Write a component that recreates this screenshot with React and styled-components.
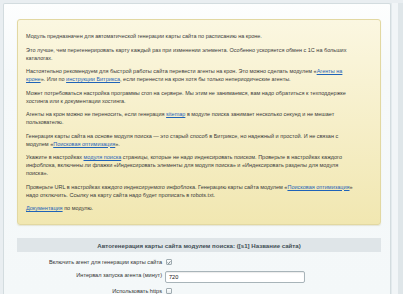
import React from 'react';
import styled, { createGlobalStyle } from 'styled-components';

const GlobalStyle = createGlobalStyle`
  html, body {
    margin: 0;
    padding: 0;
    background: #e9eef1;
    overflow: hidden;
  }
  body {
    font-family: 'Liberation Sans', Arial, sans-serif;
  }
`;

const Page = styled.div`
  display: flex;
  width: 403px;
  height: 294px;
  padding: 3px 0 0 3px;
  box-sizing: border-box;
  overflow: hidden;
`;

const Panel = styled.div`
  flex: 1;
  border: 1px solid #d3dcdf;
  border-bottom: none;
  border-radius: 2px 2px 0 0;
  background: linear-gradient(#fdfefe 0, #f6f9fa 70px, #f4f8f9 100%);
  padding: 15px 9px 0 13px;
`;

const Gutter = styled.div`
  width: 6px;
  background: #f1f5f7;
  border-left: 1px solid #e3eaed;
`;

const ScrollStrip = styled.div`
  width: 5px;
  background: #dfe6e9;
`;

const Note = styled.div`
  border: 1px solid #e2d8a2;
  border-radius: 3px;
  background: linear-gradient(#fbf7e1, #f1e7b1);
  box-shadow: 0 1px 1px rgba(180, 170, 110, 0.25);
  padding: 12px 8px 12px 8px;
  color: #3a3a3a;
  font-size: 5.5px;
  line-height: 8px;
  white-space: nowrap;
`;

const Para = styled.p`
  margin: 0 0 5.5px;
  &:last-child {
    margin-bottom: 0;
  }
`;

const Link = styled.a`
  color: #1f63b8;
  text-decoration: underline;
`;

const SectionHead = styled.div`
  margin-top: 13px;
  height: 14px;
  background: #dfe5e8;
  display: flex;
  align-items: center;
  justify-content: center;
  color: #3f4e54;
  font-size: 6.1px;
  font-weight: bold;
`;

const Row = styled.div`
  display: flex;
  align-items: ${p => (p.top ? 'flex-start' : 'center')};
  height: ${p => p.h}px;
  padding-top: ${p => p.pt || 0}px;
  gap: 3px;
  box-sizing: border-box;
`;

const Label = styled.div`
  width: 145px;
  margin-top: ${p => p.shift || 0}px;
  text-align: right;
  font-size: 5.6px;
  line-height: 8px;
  color: #333;
  white-space: nowrap;
`;

const Box = styled.span`
  width: 6px;
  height: 6px;
  box-sizing: border-box;
  border: 1px solid #9fabb0;
  border-radius: 1px;
  background: linear-gradient(#ffffff, #e6ecee);
  display: flex;
  align-items: center;
  justify-content: center;
  margin-left: 1px;
`;

const TextInput = styled.div`
  width: 140px;
  height: 12px;
  box-sizing: border-box;
  border: 1px solid #a8b4b9;
  border-radius: 2px;
  background: #fff;
  box-shadow: inset 0 1px 1px rgba(0, 0, 0, 0.08);
  padding-left: 3px;
  display: flex;
  align-items: center;
  font-size: 5.6px;
  color: #111;
`;

const Checkbox = ({ checked }) => (
  <Box>
    {checked && (
      <svg width="5" height="5" viewBox="0 0 10 10">
        <path d="M1.5 5.2 L4 7.8 L8.8 1.8" fill="none" stroke="#5a6a70" strokeWidth="1.8" />
      </svg>
    )}
  </Box>
);

export default function App() {
  return (
    <>
      <GlobalStyle />
      <Page>
        <Panel>
          <Note>
            <Para>Модуль предназначен для автоматической генерации карты сайта по расписанию на кроне.</Para>
            <Para>
              Это лучше, чем перегенерировать карту каждый раз при изменении элемента. Особенно ускоряется обмен с 1С на больших
              <br />
              каталогах.
            </Para>
            <Para>
              Настоятельно рекомендуем для быстрой работы сайта перевести агенты на крон. Это можно сделать модулем «<Link>Агенты на
              <br />
              кроне</Link>». Или по <Link>инструкции Битрикса</Link>, если перенести на крон хотя бы только непериодические агенты.
            </Para>
            <Para>
              Может потребоваться настройка программы cron на сервере. Мы этим не занимаемся, вам надо обратиться к техподдержке
              <br />
              хостинга или к документации хостинга.
            </Para>
            <Para>
              Агенты на крон можно не переносить, если генерация <Link>sitemap</Link> в модуле поиска занимает несколько секунд и не мешает
              <br />
              пользователю.
            </Para>
            <Para>
              Генерация карты сайта на основе модуля поиска — это старый способ в Битриксе, но надежный и простой. И не связан с
              <br />
              модулем «<Link>Поисковая оптимизация</Link>».
            </Para>
            <Para>
              Укажите в настройках <Link>модуля поиска</Link> страницы, которые не надо индексировать поиском. Проверьте в настройках каждого
              <br />
              инфоблока, включены ли флажки «Индексировать элементы для модуля поиска» и «Индексировать разделы для модуля
              <br />
              поиска».
            </Para>
            <Para>
              Проверьте URL в настройках каждого индексируемого инфоблока. Генерацию карты сайта модулем «<Link>Поисковая оптимизация</Link>»
              <br />
              надо отключить. Ссылку на карту сайта надо будет прописать в robots.txt.
            </Para>
            <Para>
              <Link>Документация</Link> по модулю.
            </Para>
          </Note>

          <SectionHead>Автогенерация карты сайта модулем поиска: ([s1] Название сайта)</SectionHead>

          <Row h={17} pt={3}>
            <Label>Включить агент для генерации карты сайта</Label>
            <Checkbox checked />
          </Row>
          <Row h={16} pt={2} top>
            <Label>Интервал запуска агента (минут)</Label>
            <TextInput>720</TextInput>
          </Row>
          <Row h={12} pt={3} top>
            <Label shift={-1}>Использовать https</Label>
            <Checkbox />
          </Row>
        </Panel>
        <Gutter />
        <ScrollStrip />
      </Page>
    </>
  );
}
